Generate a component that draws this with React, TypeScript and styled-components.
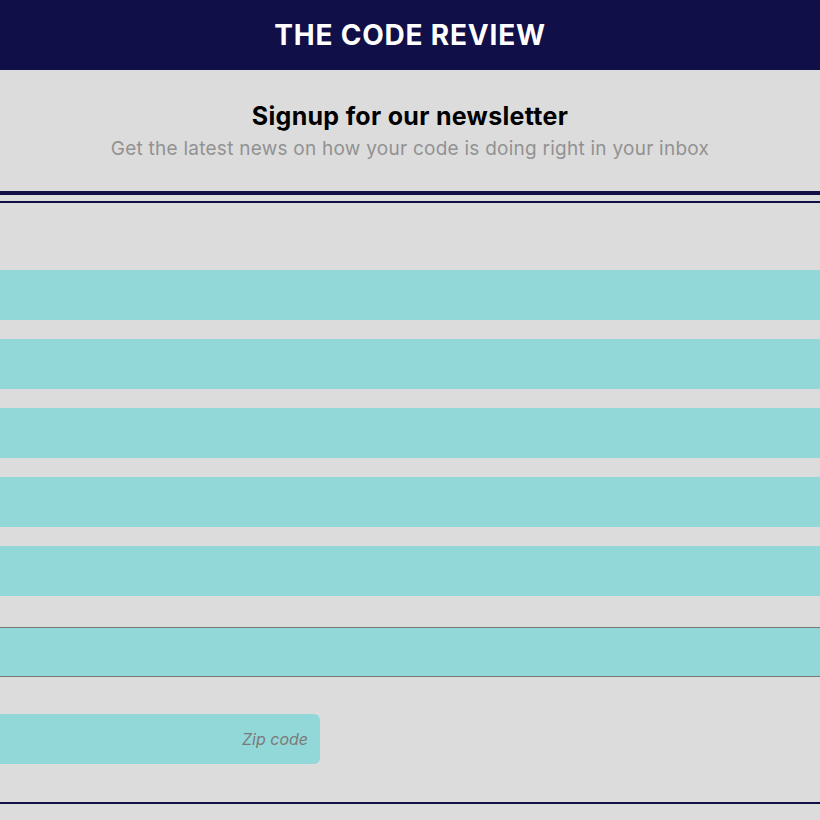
import React from 'react';
import styled, { createGlobalStyle } from 'styled-components';

const GlobalStyle = createGlobalStyle`
    body {
        margin: 0;
        background: #dcdcdc;
        font-family: Inter, Roboto, "Liberation Sans", sans-serif;
        overflow: hidden;
    }
`;

const Header = styled.header`
    height: 70px;
    background: #100f48;
    display: flex;
    align-items: center;
    justify-content: center;
`;

const Title = styled.h1`
    margin: 0;
    color: #ffffff;
    font-size: 28px;
    font-weight: 700;
    letter-spacing: 0.8px;
`;

const Intro = styled.section`
    display: flex;
    flex-direction: column;
    align-items: center;
    padding: 31px 0 0;
    height: 121px;
    box-sizing: border-box;
`;

const Heading = styled.h2`
    margin: 0;
    font-size: 25px;
    font-weight: 700;
    color: #000000;
    line-height: 30px;
    letter-spacing: 0.3px;
`;

const Subtitle = styled.p`
    margin: 5px 0 0;
    font-size: 19px;
    color: #929292;
    line-height: 26px;
    letter-spacing: 0.25px;
`;

const Rule = styled.hr<{ $thick?: boolean; $gap?: number }>`
    margin: ${(p) => p.$gap ?? 0}px 0 0;
    border: none;
    height: ${(p) => (p.$thick ? 4 : 2)}px;
    background: #100f48;
`;

const Form = styled.form`
    display: flex;
    flex-direction: column;
    padding-top: 67px;
`;

const FieldGroup = styled.div`
    display: flex;
    flex-direction: column;
    gap: 19px;
`;

const Field = styled.input<{ $bordered?: boolean }>`
    display: block;
    width: 100%;
    height: 50px;
    box-sizing: border-box;
    margin: 0;
    border: none;
    border-top: ${(p) => (p.$bordered ? '1px solid #777777' : 'none')};
    border-bottom: ${(p) => (p.$bordered ? '1px solid #777777' : 'none')};
    background: #93d8d8;
    outline: none;
`;

const Zip = styled.input`
    display: block;
    width: 320px;
    height: 50px;
    box-sizing: border-box;
    margin: 37px 0 0;
    border: none;
    border-radius: 0 6px 6px 0;
    background: #93d8d8;
    padding: 0 12px;
    text-align: right;
    font-family: Inter, Roboto, "Liberation Sans", sans-serif;
    font-size: 16px;
    font-style: italic;
    outline: none;

    &::placeholder {
        color: #7a7a7a;
    }
`;

const Spacer = styled.div<{ $h: number }>`
    height: ${(p) => p.$h}px;
`;

export default function App() {
    return (
        <>
            <GlobalStyle />
            <Header>
                <Title>THE CODE REVIEW</Title>
            </Header>
            <Intro>
                <Heading>Signup for our newsletter</Heading>
                <Subtitle>Get the latest news on how your code is doing right in your inbox</Subtitle>
            </Intro>
            <Rule $thick />
            <Rule $gap={6} />
            <Form>
                <FieldGroup>
                    <Field type="text" />
                    <Field type="text" />
                    <Field type="email" />
                    <Field type="text" />
                    <Field type="text" />
                </FieldGroup>
                <Spacer $h={31} />
                <Field $bordered type="text" />
                <Zip type="text" placeholder="Zip code" />
                <Rule $gap={38} />
            </Form>
        </>
    );
}
